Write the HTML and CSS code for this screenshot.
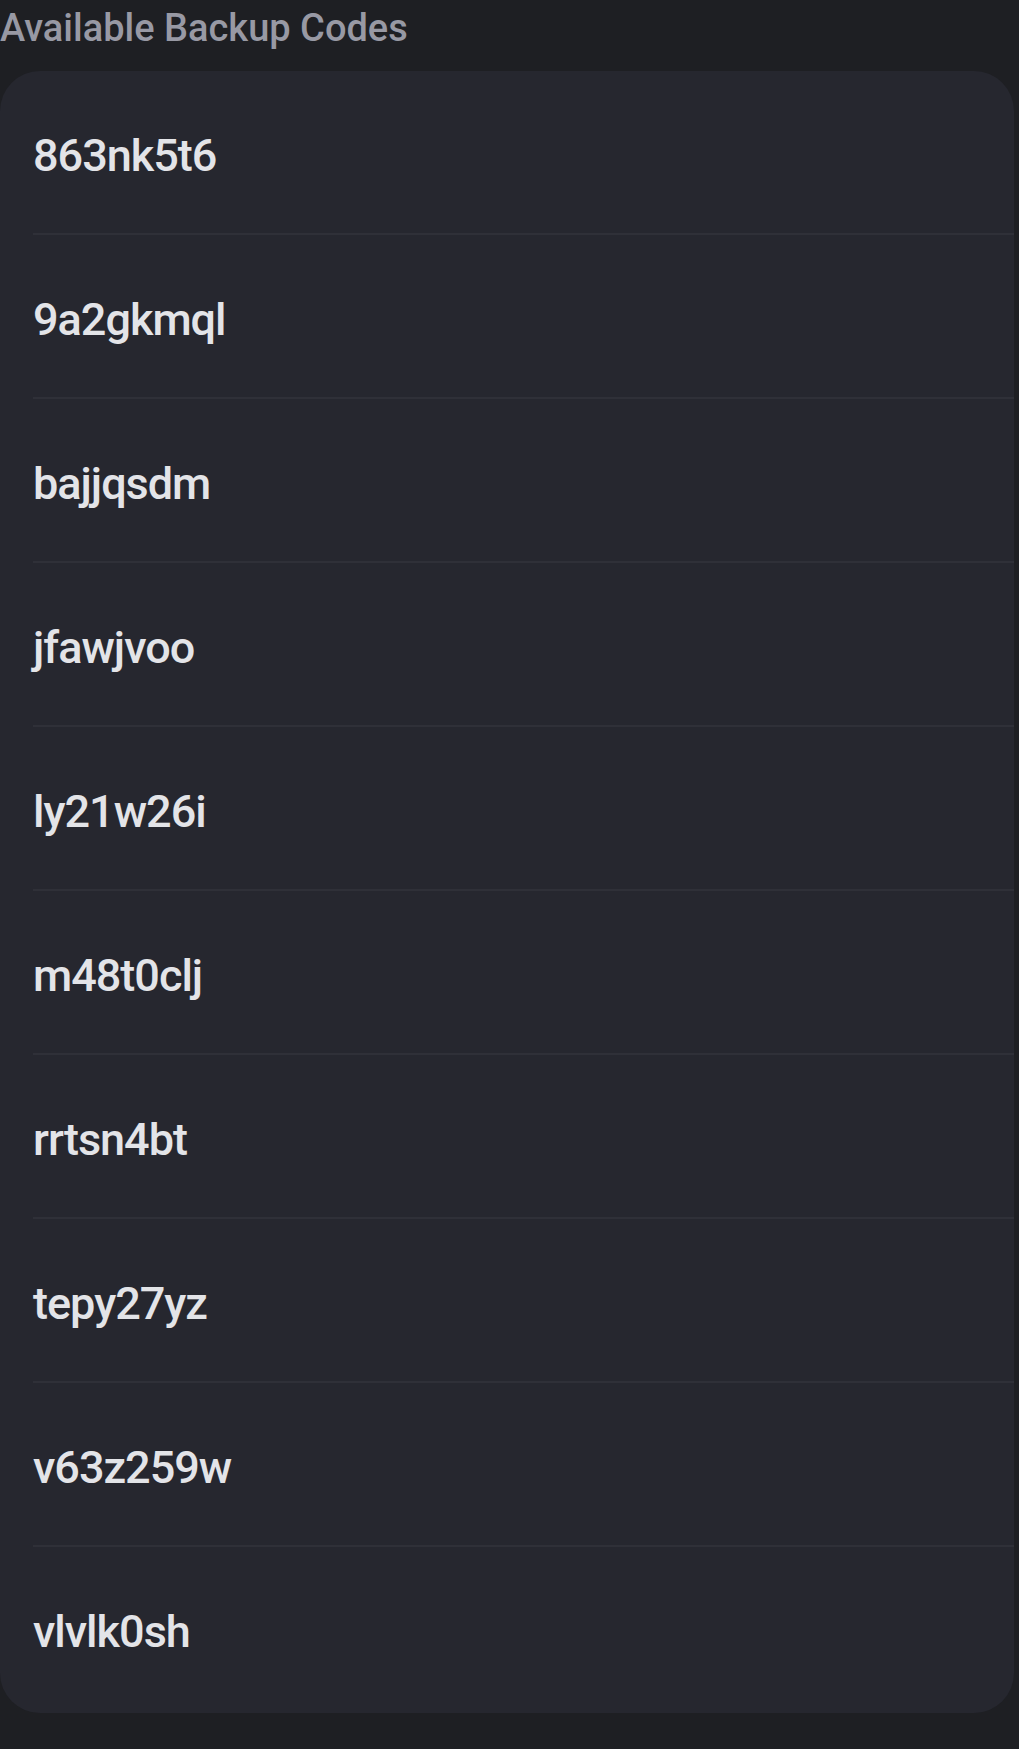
FILE: index.html
```html
<!DOCTYPE html>
<html lang="en">
<head>
<meta charset="utf-8">
<title>Available Backup Codes</title>
<link rel="stylesheet" href="styles.css">
</head>
<body>
<main class="page">
  <h2 class="title">Available Backup Codes</h2>
  <ul class="codes">
    <li class="code">863nk5t6</li>
    <li class="code">9a2gkmql</li>
    <li class="code">bajjqsdm</li>
    <li class="code">jfawjvoo</li>
    <li class="code">ly21w26i</li>
    <li class="code">m48t0clj</li>
    <li class="code">rrtsn4bt</li>
    <li class="code">tepy27yz</li>
    <li class="code">v63z259w</li>
    <li class="code">vlvlk0sh</li>
  </ul>
</main>
</body>
</html>
```
FILE: styles.css
```css
html, body {
  margin: 0;
  padding: 0;
  background: #1e1f23;
}
body {
  font-family: Roboto, "Noto Sans", sans-serif;
  min-height: 1749px;
}
.page {
  width: 1014px;
}
.title {
  margin: 0;
  padding-top: 6px;
  font-size: 38px;
  font-weight: 500;
  line-height: normal;
  color: #9899a4;
}
.codes {
  list-style: none;
  margin: 21px 0 0 0;
  padding: 0 0 0 33px;
  background: #26272f;
  border-radius: 40px;
}
.code {
  box-sizing: border-box;
  height: 164px;
  padding-top: 58px;
  font-size: 45px;
  font-weight: 500;
  line-height: normal;
  letter-spacing: -1px;
  color: #e3e4e8;
  border-bottom: 2.5px solid #2f3038;
}
.code:last-child {
  border-bottom: none;
  height: 166px;
}
```
